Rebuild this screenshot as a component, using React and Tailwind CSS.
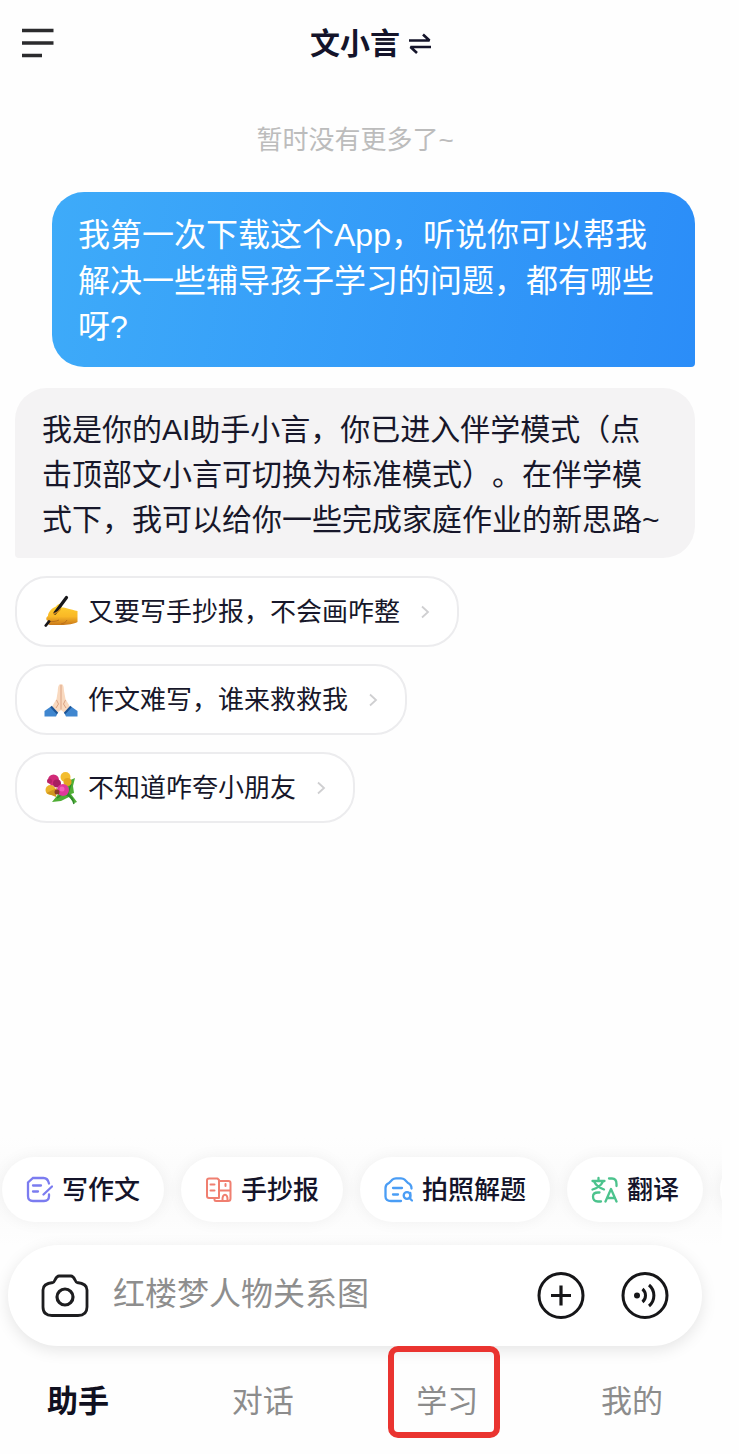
const FONT = "font-['Liberation_Sans','Noto_Sans_CJK_SC',sans-serif]";

function MenuIcon() {
  return (
    <svg className="w-8 h-8" viewBox="0 0 32 32" fill="none" stroke="#2b2b2d" strokeWidth="3.4">
      <path d="M0 2.5H31.500M0 15H31.500M0 27.500H20" />
    </svg>
  );
}

function SwitchIcon() {
  return (
    <svg className="w-6 h-6" viewBox="0 0 24 24" fill="none" stroke="#14142a" strokeWidth="2.600">
      <path d="M1 8.500H21.500L15 2.500" strokeLinejoin="bevel" />
      <path d="M23 15H2.500L9 21" strokeLinejoin="bevel" />
    </svg>
  );
}

function ChevronIcon() {
  return (
    <svg className="w-2.5 h-4 shrink-0" viewBox="0 0 10 16" fill="none" stroke="#cfcfd1" strokeWidth="1.800">
      <path d="M2 2.500L8 8L2 13.500" />
    </svg>
  );
}

function WritingHand() {
  return (
    <svg className="w-[34px] h-[34px] shrink-0" viewBox="0 0 34 34">
      <defs>
        <linearGradient id="hand" x1="0" y1="0" x2="0" y2="1">
          <stop offset="0" stopColor="#ffd232" />
          <stop offset="0.6" stopColor="#f9b826" />
          <stop offset="1" stopColor="#c9781a" />
        </linearGradient>
      </defs>
      <path d="M4 21C4 17 8 13 12 11.500C14 8.500 17 8 18 10L17.500 12.500C22 12.500 26 14.500 33.500 16V27C30 29 24 30 17 30H7C4 30 2.500 28 4 26C1.500 25 2 22 4 21Z" fill="url(#hand)" />
      <path d="M4.500 26C8 27 12 26.500 15 25M17 29C20 28.500 22 27 23 25" fill="none" stroke="#b9701c" strokeWidth="1" />
      <path d="M11 18L22.500 2.500" stroke="#17171b" strokeWidth="3.200" strokeLinecap="round" />
      <path d="M1.800 30.500L5 26.500" stroke="#17171b" strokeWidth="2.800" strokeLinecap="round" />
      <path d="M9 18.500C12 19 14 17 16.500 14" fill="none" stroke="#d08a1d" strokeWidth="1.200" />
    </svg>
  );
}

function FoldedHands() {
  return (
    <svg className="w-[34px] h-[34px] shrink-0" viewBox="0 0 34 34">
      <path d="M17 1C14.500 1 14 4 13.800 8L12.500 16L7.500 24.500L12 31L17 27L22 31L26.500 24.500L21.500 16L20 8C19.800 4 19.500 1 17 1Z" fill="#f9d9bf" />
      <path d="M17 2V26.500M12.500 17L14.500 21L12 25M21.500 17L19.500 21L22 25" fill="none" stroke="#dba384" strokeWidth="1" />
      <path d="M0.500 28L7 23.500L13.500 30.500L12 33.500H0.500Z" fill="#3f86cf" />
      <path d="M33.500 28L27 23.500L20.500 30.500L22 33.500H33.500Z" fill="#3f86cf" />
      <path d="M7 23.500L13.500 30.500M27 23.500L20.500 30.500" stroke="#1d5596" strokeWidth="2" />
    </svg>
  );
}

function Bouquet() {
  return (
    <svg className="w-[34px] h-[34px] shrink-0" viewBox="0 0 34 34">
      <path d="M24 10L31 7L29 15L30 22L27 23L33 31L30.500 32L25 26L17 30L8 31L12 26Z" fill="#4fae35" />
      <path d="M13 27L20 22L28 27L30 33M27 13L24 22L29 30" fill="none" stroke="#2f8a2a" strokeWidth="1.500" />
      <circle cx="21.500" cy="6" r="5" fill="#f3bd2f" />
      <circle cx="23.500" cy="11" r="4" fill="#e5a51f" />
      <circle cx="6.500" cy="19" r="5" fill="#eab32b" />
      <path d="M2.500 22L12 26L13 17Z" fill="#d0951f" />
      <circle cx="9.500" cy="9" r="5.500" fill="#d12a78" />
      <circle cx="13" cy="12.500" r="4" fill="#a81f60" />
      <circle cx="5.500" cy="10" r="2.500" fill="#b82468" />
      <circle cx="19" cy="19" r="6" fill="#e0379b" />
      <circle cx="18" cy="18" r="2.500" fill="#f25fb8" />
      <circle cx="13" cy="21" r="2.500" fill="#8a3a2a" />
    </svg>
  );
}

function EssayIcon() {
  return (
    <svg className="w-[27px] h-[27px] shrink-0" viewBox="0 0 27 27" fill="none" stroke="#7b7cf0" strokeWidth="2.300" strokeLinecap="round">
      <path d="M23 7.500C22 3 20 2 17.500 2H7L2 6.500V20C2 23.500 3.500 25 7 25H18C21.500 25 23 23.500 23 20V18.500" />
      <path d="M7 9.500H15M7 15.500H12M17.500 18.500L26 10.500" />
    </svg>
  );
}

function PosterIcon() {
  return (
    <svg className="w-[27px] h-[27px] shrink-0" viewBox="0 0 27 27" fill="none" stroke="#f07f70" strokeWidth="2" strokeLinecap="round" strokeLinejoin="round">
      <path d="M14 22H4C2.500 22 2 21.500 2 20V4.500C2 3 2.500 2.500 4 2.500H12.500L14 4V22M9.500 22.500V23.500C9.500 24.500 10 25 11 25H23C24.500 25 25.500 24 25.500 22.500V7C25.500 5.500 25 5 23.500 5H14" />
      <path d="M5.500 8.500H9.500M5.500 14.500H9.500M14 14.500H25M20.500 8V10" />
      <path d="M17.500 24C17 17 23 17 22.500 24" />
    </svg>
  );
}

function PhotoSolveIcon() {
  return (
    <svg className="w-[29px] h-[27px] shrink-0" viewBox="0 0 29 27" fill="none" stroke="#4a9df5" strokeWidth="2.300" strokeLinecap="round" strokeLinejoin="round">
      <path d="M17 25H7C3.500 25 1.500 23.500 1.500 20.500V12C1.500 9.500 2.500 8 5 7L8.500 3.500C9.500 2.500 10.500 2.300 12 2.300H17C18.500 2.300 19.500 2.500 20.500 3.500L24 7C26.500 8 27.500 9.500 27.500 12.500" />
      <path d="M9 12H18M9 18.500H14" />
      <circle cx="23" cy="19.500" r="3.300" />
      <path d="M26.300 17V23L28 24.500" />
    </svg>
  );
}

function TranslateIcon() {
  return (
    <svg className="w-[27px] h-[27px] shrink-0" viewBox="0 0 27 27" fill="none" stroke="#4cc38d" strokeWidth="2.300" strokeLinecap="round" strokeLinejoin="round">
      <path d="M1.500 5H13.500M7.500 2V5M3 5.500C5 9.500 8.500 12 13 13.500M12 5.500C10 9.500 7 12 1.500 13.500" />
      <path d="M18 2.500H21C24 2.500 25.500 4.500 25.500 8V10" />
      <path d="M10 25.500H7C3.500 25.500 2 23.500 2 20.500C2 18 3.500 16.500 7 16.500H8.500" />
      <path d="M14.500 25.500L20 13L25.500 25.500M16.500 22H23.500" />
    </svg>
  );
}

function CameraIcon() {
  return (
    <svg className="w-12 h-12" viewBox="0 0 48 48" fill="none" stroke="#1d1d1f" strokeWidth="2.800" strokeLinejoin="round">
      <path d="M12 10.500C14 10 14.500 4 18 4H30C33.500 4 34 10 36 10.500C42 11 46 13 46 18V35C46 41 43 43.500 37 43.500H11C5 43.500 2 41 2 35V18C2 13 6 11 12 10.500Z" />
      <circle cx="24" cy="25" r="8" strokeWidth="3.200" />
    </svg>
  );
}

function PlusIcon() {
  return (
    <svg className="w-12 h-12" viewBox="0 0 48 48" fill="none" stroke="#161618" strokeWidth="3">
      <circle cx="24" cy="23.500" r="22" />
      <path d="M14 23.500H34M24 13.500V33.500" strokeWidth="3.200" />
    </svg>
  );
}

function VoiceIcon() {
  return (
    <svg className="w-12 h-12" viewBox="0 0 48 48" fill="none" stroke="#161618" strokeWidth="3">
      <circle cx="24" cy="23.500" r="22" />
      <circle cx="16" cy="23.500" r="3" fill="#161618" stroke="none" />
      <path d="M21.500 17C25.500 20.500 25.500 26.500 21.500 30M28 13C34.500 18.500 34.500 28.500 28 34" />
    </svg>
  );
}

const suggestions = [
  { icon: WritingHand, text: '又要写手抄报，不会画咋整' },
  { icon: FoldedHands, text: '作文难写，谁来救救我' },
  { icon: Bouquet, text: '不知道咋夸小朋友' }
];

const shortcuts = [
  { icon: EssayIcon, text: '写作文' },
  { icon: PosterIcon, text: '手抄报' },
  { icon: PhotoSolveIcon, text: '拍照解题' },
  { icon: TranslateIcon, text: '翻译' }
];

const tabs = [
  { text: '助手', active: true },
  { text: '对话' },
  { text: '学习', marked: true },
  { text: '我的' }
];

function Suggestion({ icon: Icon, text }) {
  return (
    <button
      type="button"
      className="flex items-center h-[71px] px-[27px] rounded-[32px] border-2 border-[#ececee] bg-white text-[26px] leading-10 text-[#17172a]"
    >
      <Icon />
      <span className="ml-2.5 mr-5">{text}</span>
      <ChevronIcon />
    </button>
  );
}

function Shortcut({ icon: Icon, text }) {
  return (
    <button
      type="button"
      className="flex items-center gap-[9px] shrink-0 h-[65px] px-6 rounded-full bg-white text-[26px] leading-10 font-medium text-[#14142a] shadow-[0_0_16px_rgba(0,0,0,0.05)]"
    >
      <Icon />
      {text}
    </button>
  );
}

function Tab({ text, active, marked }) {
  return (
    <a
      href="#"
      aria-current={active ? 'page' : undefined}
      className={`relative text-[31px] leading-[48px] ${active ? 'font-bold text-[#10101f]' : 'text-[#8c8c8c]'}`}
    >
      {text}
      {marked && (
        <span className="absolute -left-7 -right-[22px] -top-8 -bottom-3 rounded-[10px] border-[6px] border-[#ea3430]" />
      )}
    </a>
  );
}

export default function App() {
  return (
    <div className={`${FONT} [text-spacing-trim:space-all] min-h-screen bg-[#fefefe] overflow-hidden`} lang="zh-CN">
      <div className="mr-[29px] min-h-screen flex flex-col">
        <header className="flex items-center px-[22px] pt-5">
          <button type="button" aria-label="菜单" className="w-8 h-12 flex items-center">
            <MenuIcon />
          </button>
          <h1 className="flex-1 flex items-center justify-center gap-2 text-[30px] leading-[48px] font-bold text-[#14142a]">
            文小言
            <SwitchIcon />
          </h1>
        </header>

        <main className="flex flex-col px-[15px]">
          <p className="mt-[52px] text-center text-[26px] leading-10 text-[#bcbcbc]">暂时没有更多了~</p>

          <div className="mt-8 ml-[37px] px-[26px] pt-5 pb-[17px] rounded-[32px] rounded-br-[4px] bg-linear-[100deg] from-[#3eabf9] to-[#2b8df8] text-[32px] leading-[46px] text-white">
            我第一次下载这个App，听说你可以帮我解决一些辅导孩子学习的问题，都有哪些呀?
          </div>

          <div className="mt-[21px] px-[27px] pt-[19px] pb-4 rounded-[32px] rounded-bl-[4px] bg-[#f4f3f4] text-[30px] leading-[45px] text-[#17172a]">
            我是你的AI助手小言，你已进入伴学模式（点击顶部文小言可切换为标准模式）。在伴学模式下，我可以给你一些完成家庭作业的新思路~
          </div>

          <div className="mt-[18px] flex flex-col items-start gap-[17px]">
            {suggestions.map((item) => (
              <Suggestion key={item.text} {...item} />
            ))}
          </div>
        </main>

        <footer className="mt-auto">
          {/* Shortcut strip runs on past the column edge */}
          <div className="-mr-3 pt-5 pb-[23px] pl-0.5 flex gap-[17px] overflow-hidden bg-linear-to-b from-[#fefefe] via-[#fafafa] to-[#fefefe]">
            {shortcuts.map((item) => (
              <Shortcut key={item.text} {...item} />
            ))}
            <div className="shrink-0 w-32 h-[65px] rounded-full bg-white shadow-[0_0_16px_rgba(0,0,0,0.05)]" />
          </div>

          <div className="mx-2 flex items-center h-[101px] pl-[33px] pr-[33px] rounded-full bg-white shadow-[0_4px_16px_rgba(0,0,0,0.1)]">
            <button type="button" aria-label="拍照">
              <CameraIcon />
            </button>
            <input
              type="text"
              aria-label="输入问题"
              placeholder="红楼梦人物关系图"
              className="flex-1 min-w-0 ml-6 pb-1 text-[32px] leading-[48px] outline-none placeholder:text-[#8e8e8e]"
            />
            <button type="button" aria-label="更多">
              <PlusIcon />
            </button>
            <button type="button" aria-label="语音" className="ml-9">
              <VoiceIcon />
            </button>
          </div>

          <nav className="flex justify-between px-[47px] pt-8 pb-7">
            {tabs.map((tab) => (
              <Tab key={tab.text} {...tab} />
            ))}
          </nav>
        </footer>
      </div>
    </div>
  );
}
